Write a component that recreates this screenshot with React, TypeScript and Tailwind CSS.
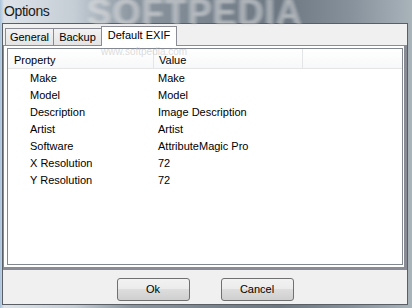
import React from "react";

const rows: [string, string][] = [
  ["Make", "Make"],
  ["Model", "Model"],
  ["Description", "Image Description"],
  ["Artist", "Artist"],
  ["Software", "AttributeMagic Pro"],
  ["X Resolution", "72"],
  ["Y Resolution", "72"],
];

function Tab({ label, width, selected }: { label: string; width: string; selected?: boolean }) {
  if (selected) {
    return (
      <div
        className={`${width} relative z-10 -mb-px -ml-px flex h-[20px] items-center justify-center border border-b-0 border-[#898c95] bg-white pb-[2px] text-[11px] text-black`}
      >
        {label}
      </div>
    );
  }
  return (
    <div
      className={`${width} flex h-[17px] items-center justify-center border border-b-0 border-[#898c95] bg-[linear-gradient(#f3f3f3,#e4e4e4)] text-[11px] text-black first:ml-0 -ml-px`}
    >
      {label}
    </div>
  );
}

function Button({ label }: { label: string }) {
  return (
    <button className="flex h-[23px] w-[73px] items-center justify-center rounded-[3px] border border-[#707070] bg-[linear-gradient(#f2f2f2_0%,#ebebeb_50%,#dddddd_50%,#cfcfcf_100%)] text-[11px] text-black">
      {label}
    </button>
  );
}

export default function App() {
  return (
    <div className="relative h-[308px] w-[412px] overflow-hidden bg-[linear-gradient(90deg,#a9c3dc_0%,#dde3e9_1%,#c5cdd5_18%,#8b96a0_32%,#7a8590_50%,#6c7782_68%,#86919b_85%,#a9b3ba_100%)] font-['Liberation_Sans',Arial,sans-serif]">
      {/* watermark, behind the window */}
      <div className="pointer-events-none absolute left-[86px] top-[-5px] text-[36px] font-bold leading-none tracking-[1px] text-white/25 blur-[1px]">
        SOFTPEDIA
      </div>

      {/* title */}
      <div className="relative flex h-[23px] items-center pl-[4px] text-[14px] tracking-[-0.4px] text-[#1a1a1a]">
        Options
      </div>

      {/* window client */}
      <div className="relative ml-[2px] flex h-[282px] w-[406px] flex-col border border-[#5a5f66] bg-[#f0f0f0]">
        <div className="flex h-[21px] items-end pl-[2px]">
          <Tab label="General" width="w-[49px]" />
          <Tab label="Backup" width="w-[49px]" />
          <Tab label="Default EXIF" width="w-[76px]" selected />
        </div>

        <div className="flex h-[225px] w-[404px] border-t border-l border-r-[3px] border-b-[3px] border-[#898c95] border-r-double border-b-double bg-white pt-[2px] pl-[3px]">
          <div className="flex h-[217px] w-[396px] flex-col border border-[#828790] bg-white">
            <div className="flex h-[20px] border-b border-[#e5e5e5] bg-[linear-gradient(#ffffff,#f7f8f9)] text-[11px] text-black">
              <div className="flex w-[146px] items-center border-r border-[#e3e5e7] pl-[6px] pt-[3px]">Property</div>
              <div className="flex w-[149px] items-center border-r border-[#e3e5e7] pl-[5px] pt-[3px]">Value</div>
            </div>
            <div className="flex flex-col pt-[1px]">
              {rows.map(([k, v]) => (
                <div key={k} className="flex h-[17px] items-center text-[11px] text-black">
                  <div className="w-[146px] pl-[22px]">{k}</div>
                  <div className="pl-[4px]">{v}</div>
                </div>
              ))}
            </div>
          </div>
        </div>

        <div className="flex flex-1 justify-center gap-[31px] pt-[8px]">
          <Button label="Ok" />
          <Button label="Cancel" />
        </div>

        {/* faint watermark over the client area */}
        <div className="pointer-events-none absolute left-[86px] top-[-29px] text-[36px] font-bold leading-none tracking-[1px] text-[#d8d8d8]/40 blur-[1px]">
          SOFTPEDIA
        </div>
        <div className="pointer-events-none absolute left-[98px] top-[20px] text-[10px] text-[#c4c4c4]/60">
          www.softpedia.com
        </div>
      </div>
    </div>
  );
}
